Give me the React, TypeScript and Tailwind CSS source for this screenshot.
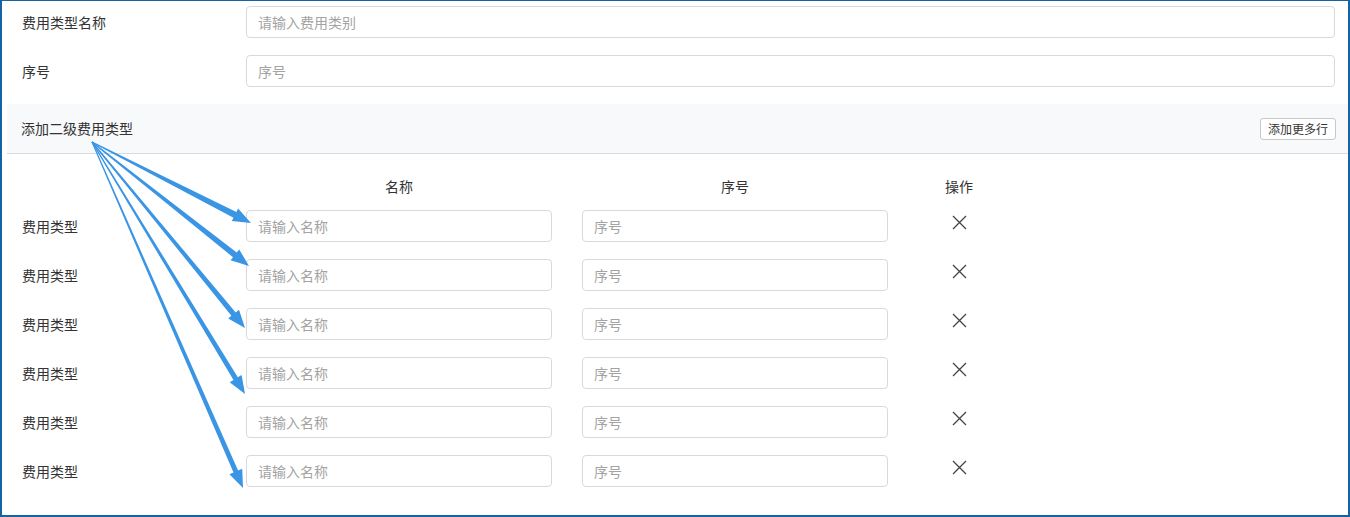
import React from 'react'

const ROWS = [0, 1, 2, 3, 4, 5]

// arrow callouts drawn over the form
const ARROWS = [
    { tip: [251, 223], w: 6.5 },
    { tip: [249, 266], w: 6 },
    { tip: [245, 328], w: 5.5 },
    { tip: [245, 394], w: 5 },
    { tip: [243, 488], w: 5 },
]
const ORIGIN = [92, 142]

function arrowPoints(x0: number, y0: number, x1: number, y1: number, w0: number, w1: number, hw: number, hl: number) {
    const dx = x1 - x0
    const dy = y1 - y0
    const len = Math.sqrt(dx * dx + dy * dy)
    const ux = dx / len
    const uy = dy / len
    const nx = -uy
    const ny = ux
    const bx = x1 - ux * hl
    const by = y1 - uy * hl
    const pts = [
        [x0 + (nx * w0) / 2, y0 + (ny * w0) / 2],
        [bx + (nx * w1) / 2, by + (ny * w1) / 2],
        [bx + (nx * hw) / 2, by + (ny * hw) / 2],
        [x1, y1],
        [bx - (nx * hw) / 2, by - (ny * hw) / 2],
        [bx - (nx * w1) / 2, by - (ny * w1) / 2],
        [x0 - (nx * w0) / 2, y0 - (ny * w0) / 2],
    ]
    return pts.map((p) => `${p[0].toFixed(1)},${p[1].toFixed(1)}`).join(' ')
}

function Field({ placeholder, className }: { placeholder: string; className?: string }) {
    return (
        <input
            type="text"
            placeholder={placeholder}
            className={`h-8 border border-[#d6d9df] rounded-[4px] px-[11px] text-[14px] text-[#333] placeholder:text-[#a3a3a3] outline-none bg-white ${className ?? ''}`}
        />
    )
}

function CloseIcon() {
    return (
        <svg width="15" height="15" viewBox="0 0 15 15" className="block">
            <path d="M1 1 L14 14 M14 1 L1 14" stroke="#444" strokeWidth="1.3" fill="none" />
        </svg>
    )
}

export default function App() {
    return (
        <div
            className="relative w-[1350px] h-[517px] overflow-hidden bg-white border-t border-l-2 border-r-2 border-b-2 border-[#1563a3] text-[#333] text-[14px]"
            style={{ fontFamily: '"Noto Sans CJK SC", "Noto Sans", sans-serif' }}
        >
            {/* Top fields */}
            <div className="pt-[5px] pl-[20px] pr-[13px] flex flex-col gap-[17px]">
                <div className="flex items-center h-8">
                    <div className="w-[224px] shrink-0">费用类型名称</div>
                    <Field placeholder="请输入费用类别" className="flex-1" />
                </div>
                <div className="flex items-center h-8">
                    <div className="w-[224px] shrink-0">序号</div>
                    <Field placeholder="序号" className="flex-1" />
                </div>
            </div>

            {/* Sub-type header */}
            <div className="mt-[17px] ml-[5px] h-[50px] bg-[#f8f9fb] border-b border-[#d3dbe3] flex items-center justify-between pl-[14px] pr-[12px]">
                <span>添加二级费用类型</span>
                <button className="h-[22px] px-[7px] border border-[#c8c8c8] rounded-[3px] bg-white text-[12px] text-[#333] leading-none">
                    添加更多行
                </button>
            </div>

            {/* Column headings */}
            <div className="flex pl-[20px] pt-[22px] pb-[14px] leading-[20px]">
                <div className="w-[224px] shrink-0" />
                <div className="w-[306px] text-center">名称</div>
                <div className="w-[306px] ml-[30px] text-center">序号</div>
                <div className="w-[142px] text-center">操作</div>
            </div>

            {/* Rows */}
            <div className="flex flex-col gap-[17px] pl-[20px]">
                {ROWS.map((r) => (
                    <div key={r} className="flex items-start h-8">
                        <div className="w-[224px] shrink-0 h-8 flex items-center">费用类型</div>
                        <Field placeholder="请输入名称" className="w-[306px]" />
                        <Field placeholder="序号" className="w-[306px] ml-[30px]" />
                        <div className="w-[142px] flex justify-center pt-[5px]">
                            <CloseIcon />
                        </div>
                    </div>
                ))}
            </div>

            {/* Annotation arrows */}
            <svg className="absolute left-[-2px] top-[-1px] pointer-events-none" width="1350" height="517">
                {ARROWS.map((a, i) => (
                    <polygon
                        key={i}
                        points={arrowPoints(ORIGIN[0], ORIGIN[1], a.tip[0], a.tip[1], 1.2, a.w, 14, 18)}
                        fill="#3a95e4"
                    />
                ))}
            </svg>
        </div>
    )
}
